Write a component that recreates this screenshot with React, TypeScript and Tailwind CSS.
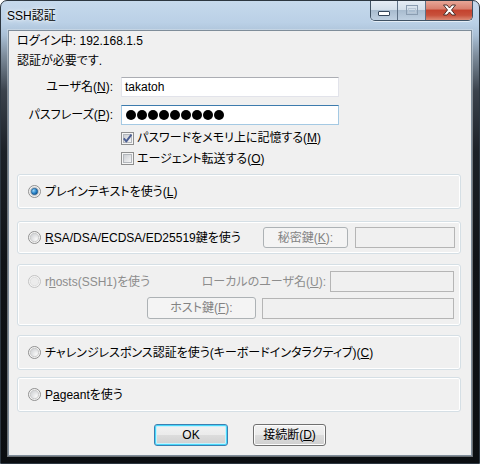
import type { ReactNode } from "react";

const uiFont =
  "[font-family:'Liberation_Sans','Noto_Sans_CJK_JP',sans-serif] [font-feature-settings:'palt'] text-[12px] leading-none";

const Acc = ({ children }: { children: ReactNode }) => (
  <span className="underline underline-offset-[1px]">{children}</span>
);

function CheckBox({ checked = false }: { checked?: boolean }) {
  return (
    <svg width="13" height="13" viewBox="0 0 13 13" className="shrink-0">
      <defs>
        <linearGradient id="cbFill" x1="0" y1="0" x2="1" y2="1">
          <stop offset="0" stopColor="#c9ccd1" />
          <stop offset="1" stopColor="#f7f7f7" />
        </linearGradient>
      </defs>
      <rect x="0.5" y="0.5" width="12" height="12" fill="#f5f5f5" stroke="#8e8f8f" />
      <rect x="2.5" y="2.5" width="8" height="8" fill="url(#cbFill)" stroke="#b3b7bc" />
      {checked && (
        <path
          d="M2.8 6.4 L5.3 9.4 L10.4 2.6"
          fill="none"
          stroke="#4c5f93"
          strokeWidth="1.9"
          strokeLinejoin="round"
        />
      )}
    </svg>
  );
}

function Radio({ checked = false, disabled = false }: { checked?: boolean; disabled?: boolean }) {
  return (
    <svg width="13" height="13" viewBox="0 0 13 13" className="shrink-0">
      <defs>
        <radialGradient id="rdInner" cx="0.7" cy="0.7" r="0.8">
          <stop offset="0" stopColor="#f8f8f8" />
          <stop offset="1" stopColor="#cfd1d4" />
        </radialGradient>
        <radialGradient id="rdDot" cx="0.35" cy="0.35" r="0.75">
          <stop offset="0" stopColor="#9ad4f6" />
          <stop offset="0.55" stopColor="#2a86cc" />
          <stop offset="1" stopColor="#0c4d8a" />
        </radialGradient>
      </defs>
      <circle cx="6.5" cy="6.5" r="6" fill="#f4f4f4" stroke={disabled ? "#c2c2c2" : "#8f8f8f"} />
      <circle cx="6.5" cy="6.5" r="4.2" fill={disabled ? "#ececec" : "url(#rdInner)"} stroke={disabled ? "#dadada" : "#c4c4c4"} strokeWidth="0.8" />
      {checked && <circle cx="6.5" cy="6.5" r="3.2" fill="url(#rdDot)" stroke="#1b4f7c" strokeWidth="0.6" />}
    </svg>
  );
}

function TextBox({
  className = "",
  focused = false,
  disabled = false,
  children,
}: {
  className?: string;
  focused?: boolean;
  disabled?: boolean;
  children?: ReactNode;
}) {
  const look = disabled
    ? "border-[#b5b5b5] bg-[#f0f0f0]"
    : focused
      ? "border-[#a4c9e3] border-t-[#3d7bad] bg-white"
      : "border-[#e2e3ea] border-t-[#abadb3] bg-white";
  return (
    <div className={`flex items-center border px-[3px] ${look} ${className}`}>
      {children}
    </div>
  );
}

function WinButton({
  children,
  className = "",
  disabled = false,
  primary = false,
}: {
  children: ReactNode;
  className?: string;
  disabled?: boolean;
  primary?: boolean;
}) {
  const look = disabled
    ? "border-[#adb2b5] bg-[#f4f4f4] text-[#838383]"
    : primary
      ? "border-[#3c7fb1] bg-[linear-gradient(180deg,#f2f2f2_0%,#ebebeb_50%,#dddddd_50%,#cfcfcf_100%)] shadow-[inset_0_0_0_1px_#48d8fb,inset_0_0_0_2px_#c6f1fd] text-black"
      : "border-[#707070] bg-[linear-gradient(180deg,#f2f2f2_0%,#ebebeb_50%,#dddddd_50%,#cfcfcf_100%)] shadow-[inset_0_0_0_1px_#fcfcfc] text-black";
  return (
    <div className={`flex items-center justify-center rounded-[3px] border ${look} ${className}`}>
      {children}
    </div>
  );
}

function GroupBox({ className = "", children }: { className?: string; children: ReactNode }) {
  return (
    <div
      className={`ml-[8px] w-[444px] rounded-[3px] border border-[#d5dfe5] shadow-[inset_0_0_0_1px_#ffffff] ${className}`}
    >
      {children}
    </div>
  );
}

function CaptionButtons() {
  return (
    <div className="mr-[6px] flex h-[20px] self-start overflow-hidden rounded-b-[5px] border border-t-0 border-[#3f5163] shadow-[0_1px_0_rgba(255,255,255,0.6)]">
      {/* minimize */}
      <div className="flex w-[27px] items-end justify-center border-r border-[#5d7085] bg-[linear-gradient(180deg,#e4ecf4_0%,#d3dfea_45%,#a9bccf_50%,#bfd0e1_100%)] pb-[4px]">
        <svg width="12" height="5" viewBox="0 0 12 5">
          <rect x="0.5" y="0.5" width="11" height="4" rx="0.5" fill="#ffffff" stroke="#35465a" />
        </svg>
      </div>
      {/* maximize (disabled) */}
      <div className="flex w-[28px] items-center justify-center border-r border-[#5d7085] bg-[linear-gradient(180deg,#e4ecf4_0%,#d3dfea_45%,#a9bccf_50%,#bfd0e1_100%)] pb-[1px]">
        <svg width="12" height="10" viewBox="0 0 12 10">
          <rect x="0.5" y="0.5" width="11" height="9" fill="none" stroke="#8a9cb0" />
          <rect x="2.5" y="3.5" width="7" height="4" fill="none" stroke="#b9c7d6" />
        </svg>
      </div>
      {/* close */}
      <div className="flex w-[46px] items-center justify-center bg-[linear-gradient(180deg,#e7a697_0%,#d98170_40%,#c4432f_50%,#c8513c_75%,#dc8a75_100%)] pb-[1px]">
        <svg width="15" height="12" viewBox="0 0 15 12">
          <path
            d="M1.5 1 H5 L7.5 4 L10 1 H13.5 L9.5 6 L13.5 11 H10 L7.5 8 L5 11 H1.5 L5.5 6 Z"
            fill="#ffffff"
            stroke="#3c2420"
            strokeWidth="0.9"
            strokeLinejoin="round"
          />
        </svg>
      </div>
    </div>
  );
}

export default function App() {
  return (
    <div className="min-h-screen bg-white">
      <div
        className={`flex h-[464px] w-[480px] flex-col overflow-hidden rounded-t-[7px] border border-[#2c3640] bg-[linear-gradient(180deg,#c6d9ec_0px,#bad0e6_22px,#aac0d6_34px,#7d8c9b_55px,#3a424c_90px,#1c2127_150px,#101317_260px,#0b0e11_100%)] ${uiFont}`}
      >
        {/* title bar */}
        <div className="flex h-[29px] shrink-0 items-start justify-between">
          <div className="pl-[6px] pt-[9px] text-[12px] text-black [text-shadow:0_0_6px_#ffffff,0_0_3px_#ffffff]">
            SSH認証
          </div>
          <CaptionButtons />
        </div>

        {/* client area */}
        <div className="mx-[7px] mb-[7px] flex flex-1 flex-col border border-[#7f8d9a] bg-[#f0f0f0] text-black shadow-[0_0_0_1px_rgba(220,228,236,0.45)]">
          <div className="flex h-[20px] items-center pl-[8px]">ログイン中: 192.168.1.5</div>
          <div className="flex h-[20px] items-center pl-[8px]">認証が必要です.</div>

          <div className="mt-[6px] flex h-[20px] items-center">
            <div className="w-[104px] text-right">
              ユーザ名(<Acc>N</Acc>):
            </div>
            <TextBox className="ml-[8px] h-[20px] w-[218px]">takatoh</TextBox>
          </div>

          <div className="mt-[8px] flex h-[20px] items-center">
            <div className="w-[104px] text-right">
              パスフレーズ(<Acc>P</Acc>):
            </div>
            <TextBox focused className="ml-[8px] h-[20px] w-[218px] gap-[1px] pl-[4px]">
              {Array.from({ length: 9 }).map((_, i) => (
                <span key={i} className="h-[10px] w-[10px] rounded-full bg-black" />
              ))}
            </TextBox>
          </div>

          <div className="mt-[3px] flex h-[20px] items-center gap-[3px] pl-[112px]">
            <CheckBox checked />
            <span>
              パスワードをメモリ上に記憶する(<Acc>M</Acc>)
            </span>
          </div>
          <div className="flex h-[21px] items-center gap-[3px] pl-[112px]">
            <CheckBox />
            <span>
              エージェント転送する(<Acc>O</Acc>)
            </span>
          </div>

          <GroupBox className="mt-[5px] flex h-[35px] items-center gap-[4px] pl-[10px]">
            <Radio checked />
            <span>
              プレインテキストを使う(<Acc>L</Acc>)
            </span>
          </GroupBox>

          <GroupBox className="mt-[12px] flex h-[33px] items-center pl-[10px]">
            <div className="flex w-[235px] items-center gap-[4px]">
              <Radio />
              <span>
                <Acc>R</Acc>SA/DSA/ECDSA/ED25519鍵を使う
              </span>
            </div>
            <WinButton disabled className="h-[21px] w-[85px]">
              秘密鍵(<Acc>K</Acc>):
            </WinButton>
            <TextBox disabled className="ml-[7px] h-[21px] w-[100px]" />
          </GroupBox>

          <GroupBox className="mt-[10px] flex h-[62px] flex-col pl-[10px] pr-[6px] pt-[6px]">
            <div className="flex h-[21px] items-center">
              <div className="flex w-[150px] items-center gap-[4px] text-[#8d8d8d]">
                <Radio disabled />
                <span>
                  r<Acc>h</Acc>osts(SSH1)を使う
                </span>
              </div>
              <div className="flex-1 pr-[4px] text-right text-[#8d8d8d]">
                ローカルのユーザ名(<Acc>U</Acc>):
              </div>
              <TextBox disabled className="h-[21px] w-[124px]" />
            </div>
            <div className="mt-[5px] flex h-[22px] items-center pl-[119px]">
              <WinButton disabled className="h-[22px] w-[109px]">
                ホスト鍵(<Acc>F</Acc>):
              </WinButton>
              <TextBox disabled className="ml-[6px] h-[21px] w-[192px]" />
            </div>
          </GroupBox>

          <GroupBox className="mt-[9px] flex h-[35px] items-center gap-[4px] pl-[10px]">
            <Radio />
            <span>
              チャレンジレスポンス認証を使う(キーボードインタラクティブ)(<Acc>C</Acc>)
            </span>
          </GroupBox>

          <GroupBox className="mt-[7px] flex h-[35px] items-center gap-[4px] pl-[10px]">
            <Radio />
            <span>
              P<Acc>a</Acc>geantを使う
            </span>
          </GroupBox>

          <div className="mt-[12px] flex justify-center gap-[25px]">
            <WinButton primary className="h-[22px] w-[74px]">
              OK
            </WinButton>
            <WinButton className="h-[22px] w-[73px]">
              接続断(<Acc>D</Acc>)
            </WinButton>
          </div>
        </div>
      </div>
    </div>
  );
}
